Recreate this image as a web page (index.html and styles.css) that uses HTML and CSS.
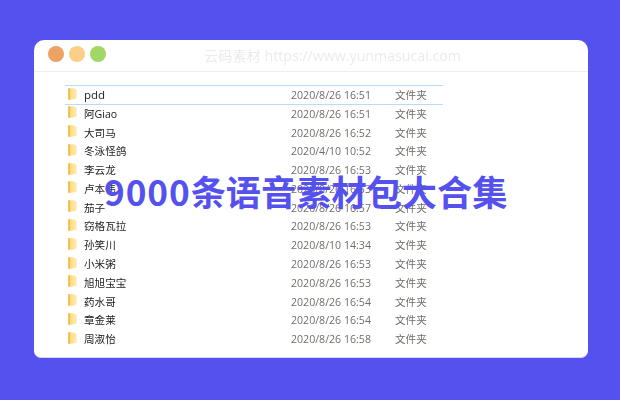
FILE: index.html
```html
<!DOCTYPE html>
<html lang="zh-CN">
<head>
<meta charset="utf-8">
<title>9000条语音素材包大合集</title>
<link rel="stylesheet" href="styles.css">
</head>
<body>
<svg class="defs" width="0" height="0" aria-hidden="true"><defs>
<linearGradient id="fold" x1="0" x2="1" y1="0" y2="0"><stop offset="0" stop-color="#f6cb5c"/><stop offset="0.4" stop-color="#fde18e"/><stop offset="1" stop-color="#fdeab4"/></linearGradient>
<symbol id="folder" viewBox="0 0 9 12"><path d="M0.3 0.3H5.5L8.7 1.8V10.6L4 11.7H0.3Z" fill="url(#fold)"/><path d="M0.3 0.3H2V11.7H0.3Z" fill="#f0bd48"/></symbol>
</defs></svg>
<main class="window">
  <header class="titlebar">
    <div class="lights"><span class="light red"></span><span class="light yellow"></span><span class="light green"></span></div>
    <div class="watermark">云码素材 https://www.yunmasucai.com</div>
  </header>
  <ul class="files">
    <li class="row selected"><svg class="icon"><use href="#folder"/></svg><span class="name latin">pdd</span><span class="date">2020/8/26 16:51</span><span class="type">文件夹</span></li>
    <li class="row"><svg class="icon"><use href="#folder"/></svg><span class="name">阿Giao</span><span class="date">2020/8/26 16:51</span><span class="type">文件夹</span></li>
    <li class="row"><svg class="icon"><use href="#folder"/></svg><span class="name">大司马</span><span class="date">2020/8/26 16:52</span><span class="type">文件夹</span></li>
    <li class="row"><svg class="icon"><use href="#folder"/></svg><span class="name">冬泳怪鸽</span><span class="date">2020/4/10 10:52</span><span class="type">文件夹</span></li>
    <li class="row"><svg class="icon"><use href="#folder"/></svg><span class="name">李云龙</span><span class="date">2020/8/26 16:53</span><span class="type">文件夹</span></li>
    <li class="row"><svg class="icon"><use href="#folder"/></svg><span class="name">卢本伟</span><span class="date">2020/8/26 16:53</span><span class="type">文件夹</span></li>
    <li class="row"><svg class="icon"><use href="#folder"/></svg><span class="name">茄子</span><span class="date">2020/8/26 16:57</span><span class="type">文件夹</span></li>
    <li class="row"><svg class="icon"><use href="#folder"/></svg><span class="name">窃格瓦拉</span><span class="date">2020/8/26 16:53</span><span class="type">文件夹</span></li>
    <li class="row"><svg class="icon"><use href="#folder"/></svg><span class="name">孙笑川</span><span class="date">2020/8/10 14:34</span><span class="type">文件夹</span></li>
    <li class="row"><svg class="icon"><use href="#folder"/></svg><span class="name">小米粥</span><span class="date">2020/8/26 16:53</span><span class="type">文件夹</span></li>
    <li class="row"><svg class="icon"><use href="#folder"/></svg><span class="name">旭旭宝宝</span><span class="date">2020/8/26 16:53</span><span class="type">文件夹</span></li>
    <li class="row"><svg class="icon"><use href="#folder"/></svg><span class="name">药水哥</span><span class="date">2020/8/26 16:54</span><span class="type">文件夹</span></li>
    <li class="row"><svg class="icon"><use href="#folder"/></svg><span class="name">章金莱</span><span class="date">2020/8/26 16:54</span><span class="type">文件夹</span></li>
    <li class="row"><svg class="icon"><use href="#folder"/></svg><span class="name">周淑怡</span><span class="date">2020/8/26 16:58</span><span class="type">文件夹</span></li>
  </ul>
</main>
<h1 class="headline"><span class="digits">9000</span>条语音素材包大合集</h1>
</body>
</html>
```
FILE: styles.css
```css
* { box-sizing: border-box; }
html, body { margin: 0; height: 400px; overflow: hidden; }
body {
  background: #5551ee;
  padding: 40px 32px 42px 34px;
  position: relative;
  font-family: "Open Sans", "Noto Sans CJK SC", sans-serif;
}
.defs { position: absolute; }
.window {
  height: 318px;
  background: #fff;
  border-radius: 10px 10px 7px 7px;
  border-bottom: 1px solid #d5d5f5;
}
.titlebar {
  height: 32px;
  display: flex;
  align-items: center;
  border-bottom: 1px solid #eeeeee;
  padding: 0 0 3px 14px;
  position: relative;
}
.lights { display: flex; gap: 5px; }
.light { width: 16px; height: 16px; border-radius: 50%; }
.red { background: #eda163; }
.yellow { background: #fbcf88; }
.green { background: #a0d765; }
.watermark {
  position: absolute;
  left: 170px;
  top: 6px;
  font-size: 14.2px;
  line-height: 20px;
  color: #ebebeb;
  white-space: nowrap;
  filter: blur(0.3px);
}
.files {
  list-style: none;
  margin: 13px 0 0 31px;
  padding: 0;
  width: 378px;
  font-size: 10.6px;
  color: #222;
  filter: blur(0.25px);
}
.row {
  height: 18.77px;
  display: grid;
  grid-template-columns: 16px 207px 104px 1fr;
  align-items: center;
  padding-left: 3px;
}
.row.selected {
  height: 19.5px;
  border-top: 1px solid #b5dcf8;
  border-bottom: 1px solid #b5dcf8;
}
.icon { width: 9px; height: 12px; margin-top: -3px; }
.name { line-height: 18px; }
.latin { font-size: 11.5px; font-weight: 500; }
.date, .type { color: #726c68; line-height: 18px; }
.headline {
  position: absolute;
  left: 104px;
  top: 166px;
  margin: 0;
  font-family: "Noto Sans CJK SC", sans-serif;
  font-size: 35.2px;
  line-height: 50px;
  font-weight: 700;
  color: #5551ee;
  white-space: nowrap;
}
.digits { letter-spacing: 0.9px; }
```
